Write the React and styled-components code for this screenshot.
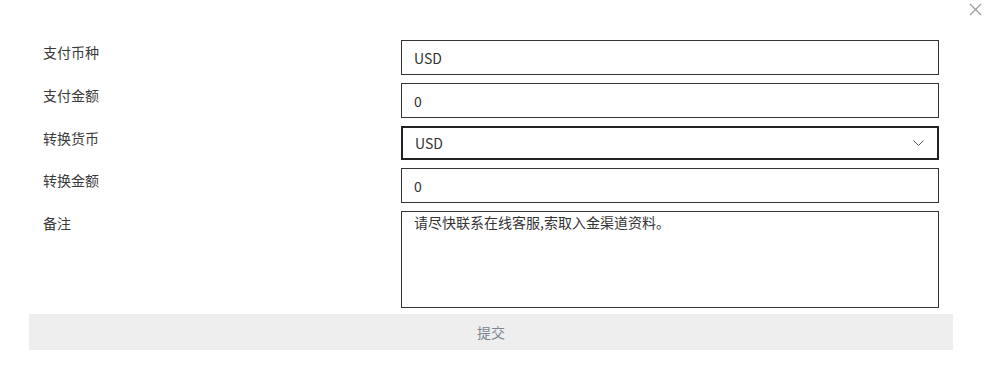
import React from "react";
import styled, { createGlobalStyle } from "styled-components";

const GlobalStyle = createGlobalStyle`
  html, body {
    margin: 0;
    padding: 0;
    background: #fff;
  }
  body {
    font-family: "Noto Sans CJK SC", "Noto Sans", sans-serif;
    color: #333;
  }
`;

const Modal = styled.div`
  position: relative;
  width: 988px;
  height: 385px;
  box-sizing: border-box;
  padding: 40px 35px 0 29px;
`;

const CloseButton = styled.button`
  position: absolute;
  top: 2px;
  right: 6px;
  width: 14px;
  height: 14px;
  padding: 0;
  border: none;
  background: transparent;
  cursor: pointer;
  display: flex;
  align-items: center;
  justify-content: center;
`;

const Form = styled.form`
  display: flex;
  flex-direction: column;
`;

const Fields = styled.div`
  display: grid;
  grid-template-columns: 372px 538px;
  row-gap: 8px;
  align-items: start;
`;

const Label = styled.label`
  padding-left: 14px;
  font-size: 14px;
  line-height: 24px;
  color: #3a3a3a;
`;

const Input = styled.input`
  box-sizing: border-box;
  width: 100%;
  height: 35px;
  padding: 0 12px;
  border: 1px solid #333;
  border-radius: 0;
  outline: none;
  font-family: inherit;
  font-size: 14px;
  color: #333;
  background: #fff;
`;

const SelectBox = styled.div`
  box-sizing: border-box;
  height: 34px;
  padding: 0 13px 0 12px;
  border: 2px solid #222;
  display: flex;
  align-items: center;
  justify-content: space-between;
  font-size: 14px;
  color: #333;
`;

const TextArea = styled.textarea`
  box-sizing: border-box;
  width: 100%;
  height: 97px;
  padding: 0 12px;
  border: 1px solid #333;
  border-radius: 0;
  outline: none;
  resize: none;
  font-family: inherit;
  font-size: 14px;
  line-height: 20px;
  color: #333;
`;

const Submit = styled.button`
  margin-top: 6px;
  width: 924px;
  height: 36px;
  border: none;
  background: #eeeeee;
  font-family: inherit;
  font-size: 14px;
  color: #7d8590;
  cursor: pointer;
`;

const Chevron = () => (
  <svg width="11" height="6" viewBox="0 0 11 6" fill="none">
    <path d="M0.5 0.5l5 5 5-5" stroke="#555" strokeWidth="1" />
  </svg>
);

const CloseIcon = () => (
  <svg width="13" height="13" viewBox="0 0 13 13" fill="none">
    <path d="M1 1l11 11M12 1L1 12" stroke="#999" strokeWidth="1.1" />
  </svg>
);

export default function App() {
  return (
    <>
      <GlobalStyle />
      <Modal>
        <CloseButton type="button" aria-label="close">
          <CloseIcon />
        </CloseButton>
        <Form onSubmit={(e) => e.preventDefault()}>
          <Fields>
            <Label>支付币种</Label>
            <Input defaultValue="USD" readOnly />
            <Label>支付金额</Label>
            <Input defaultValue="0" />
            <Label>转换货币</Label>
            <SelectBox>
              <span>USD</span>
              <Chevron />
            </SelectBox>
            <Label>转换金额</Label>
            <Input defaultValue="0" />
            <Label>备注</Label>
            <TextArea defaultValue="请尽快联系在线客服,索取入金渠道资料。" />
          </Fields>
          <Submit type="submit">提交</Submit>
        </Form>
      </Modal>
    </>
  );
}
